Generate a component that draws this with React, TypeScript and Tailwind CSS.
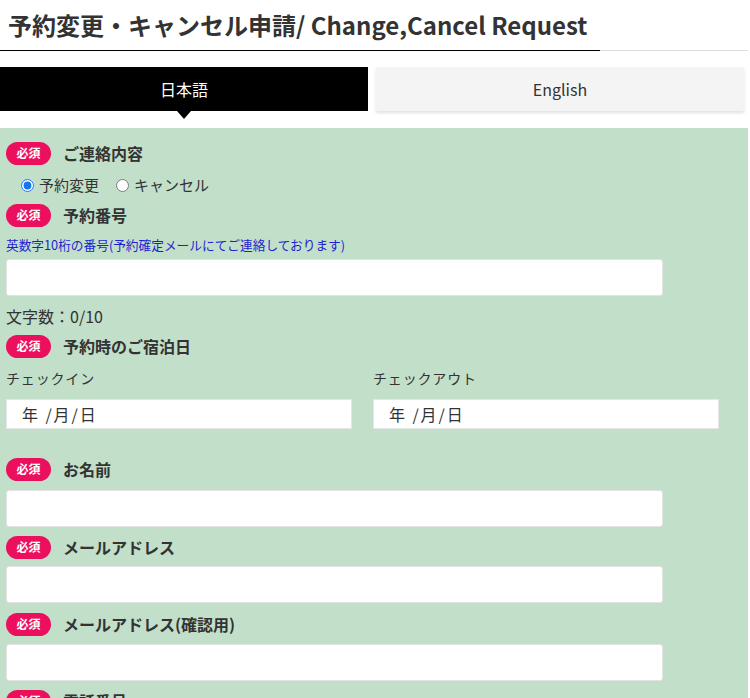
import React from "react"

const font = "font-['Noto_Sans_CJK_JP','Noto_Sans',sans-serif]"

function Badge() {
  return (
    <span className="flex h-[23px] w-[45px] shrink-0 items-center justify-center rounded-full bg-[#ec0f5e] text-[12px] font-bold leading-none text-white">
      必須
    </span>
  )
}

function FieldLabel({ text, className = "" }: { text: string; className?: string }) {
  return (
    <div className={`flex h-[22px] items-center ${className}`}>
      <Badge />
      <span className="ml-3 text-[16px] font-bold leading-none text-[#333]">{text}</span>
    </div>
  )
}

function TextBox({ className = "" }: { className?: string }) {
  return (
    <input
      type="text"
      className={`block h-[37px] w-[657px] rounded-[3px] border border-[#e3e3e3] bg-white px-3 text-[15px] outline-none ${className}`}
    />
  )
}

function DateBox({ label }: { label: string }) {
  return (
    <div className="w-[346px]">
      <div className="h-[20px] text-[14px] leading-[20px] tracking-[0.06em] text-[#333]">{label}</div>
      <div className="mt-[11px] flex h-[30px] items-center border border-[#e6e6e6] bg-white pl-[15px] text-[16px] tracking-[0.12em] text-[#333]">
        年 /月/日
      </div>
    </div>
  )
}

export default function App() {
  return (
    <div className={`w-[748px] bg-white ${font}`}>
      {/* page title */}
      <div className="flex border-b border-[#dcdcdc]">
        <h1 className="-mb-px flex h-[51px] items-center border-b border-black pl-2 pr-[13px] text-[24px] font-bold text-[#333]">
          予約変更・キャンセル申請/ Change,Cancel Request
        </h1>
      </div>

      {/* language tabs */}
      <div className="mt-4 mb-[17px] flex gap-2">
        <div className="relative flex h-[44px] w-[368px] items-center justify-center bg-black text-[16px] text-white">
          日本語
          <span className="absolute left-1/2 top-full -translate-x-1/2 border-x-[7px] border-t-[8px] border-x-transparent border-t-black" />
        </div>
        <div className="flex h-[44px] w-[368px] items-center justify-center bg-[#f4f4f4] text-[16px] text-[#333] shadow-[0_2px_3px_rgba(0,0,0,0.12)]">
          English
        </div>
      </div>

      {/* form */}
      <div className="bg-[#c2dfca] px-[6px] pt-[14px] pb-4">
        <FieldLabel text="ご連絡内容" />
        <div className="mt-[10px] flex h-[22px] items-center pl-[15px] text-[15px] text-[#333]">
          <label className="flex items-center">
            <input type="radio" name="kind" defaultChecked className="m-0 h-[13px] w-[13px] accent-[#1a73e8]" />
            <span className="ml-[5px]">予約変更</span>
          </label>
          <label className="ml-[17px] flex items-center">
            <input type="radio" name="kind" className="m-0 h-[13px] w-[13px]" />
            <span className="ml-[5px]">キャンセル</span>
          </label>
        </div>

        <FieldLabel text="予約番号" className="mt-2" />
        <div className="mt-[10px] h-[18px] text-[12.7px] leading-[18px] text-[#1f1fd0]">
          英数字10桁の番号(予約確定メールにてご連絡しております)
        </div>
        <TextBox className="mt-[5px]" />
        <div className="mt-[10px] h-[20px] text-[16px] leading-[20px] text-[#333]">文字数：0/10</div>

        <FieldLabel text="予約時のご宿泊日" className="mt-[9px]" />
        <div className="mt-[11px] flex gap-[21px]">
          <DateBox label="チェックイン" />
          <DateBox label="チェックアウト" />
        </div>

        <FieldLabel text="お名前" className="mt-[29px]" />
        <TextBox className="mt-[10px]" />

        <FieldLabel text="メールアドレス" className="mt-[9px]" />
        <TextBox className="mt-2" />

        <FieldLabel text="メールアドレス(確認用)" className="mt-[10px]" />
        <TextBox className="mt-[9px]" />

        <FieldLabel text="電話番号" className="mt-[9px]" />
        <TextBox className="mt-[9px]" />
      </div>
    </div>
  )
}
